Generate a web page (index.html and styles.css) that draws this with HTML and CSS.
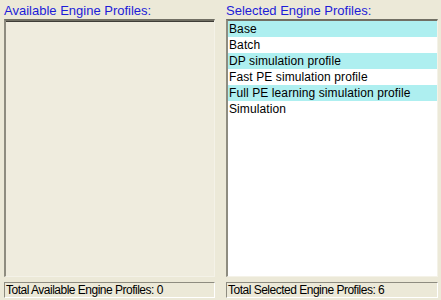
FILE: index.html
```html
<!DOCTYPE html>
<html lang="en">
  <head>
    <meta charset="UTF-8" />
    <title>Engine Profiles</title>
    <link rel="stylesheet" href="styles.css">
  </head>
  <body>
    <div class="profiles">
      <!-- Available -->
      <div class="pane">
        <div class="pane-label">Available Engine Profiles:</div>
        <div class="listbox disabled"></div>
        <div class="status">Total Available Engine Profiles: 0</div>
      </div>

      <!-- Selected -->
      <div class="pane">
        <div class="pane-label">Selected Engine Profiles:</div>
        <div class="listbox">
          <div class="item alt">Base</div>
          <div class="item">Batch</div>
          <div class="item alt">DP simulation profile</div>
          <div class="item">Fast PE simulation profile</div>
          <div class="item alt">Full PE learning simulation profile</div>
          <div class="item">Simulation</div>
        </div>
        <div class="status">Total Selected Engine Profiles: 6</div>
      </div>
    </div>
  </body>
</html>
```
FILE: styles.css
```css
body {
  margin: 0;
  background: #ece9d8;
  font-family: "Liberation Sans", Arial, sans-serif;
  font-size: 12px;
  color: #000;
}

.profiles {
  display: grid;
  grid-template-columns: 211px 212px;
  column-gap: 11px;
  padding: 0 3px 0 4px;
  height: 300px;
  box-sizing: border-box;
}

.pane {
  display: flex;
  flex-direction: column;
}

.pane-label {
  color: #1c1cd8;
  font-size: 13px;
  height: 19px;
  line-height: 14px;
  padding-top: 4px;
  box-sizing: border-box;
  white-space: nowrap;
}

/* Lista con borde hundido */
.listbox {
  height: 258px;
  box-sizing: border-box;
  border-top: 2px solid #716f64;
  border-left: 2px solid #8e8c80;
  border-right: 1px solid #f4f2e8;
  border-bottom: 1px solid #f4f2e8;
  background: #fff;
  box-shadow: inset 0 1px 0 #3e3d37;
}

.listbox.disabled {
  background: #efecde;
}

.item {
  height: 16px;
  line-height: 16px;
  padding-left: 1px;
  white-space: nowrap;
  letter-spacing: 0.1px;
}

.item.alt {
  background: #aeeff0;
}

/* Barra de estado */
.status {
  margin-top: 5px;
  height: 16px;
  line-height: 15px;
  box-sizing: border-box;
  border-top: 1px solid #8e8c80;
  border-left: 1px solid #8e8c80;
  border-right: 1px solid #fff;
  border-bottom: 1px solid #fff;
  padding-left: 1px;
  white-space: nowrap;
  letter-spacing: -0.5px;
}
```
